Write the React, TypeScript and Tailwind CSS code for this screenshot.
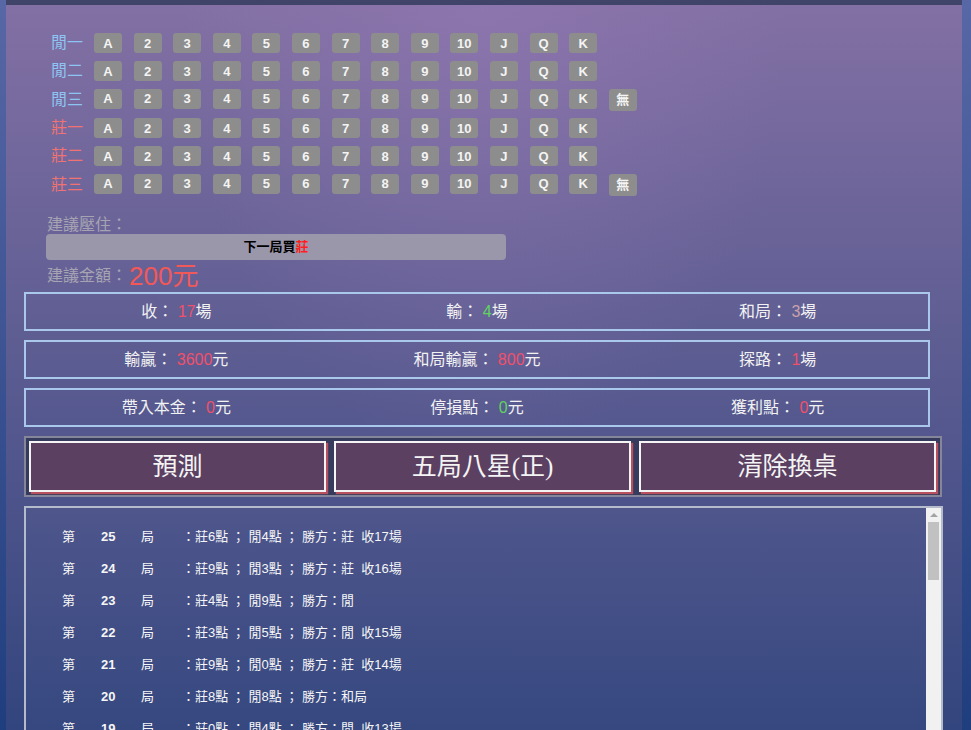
import React from 'react';

const cards = ['A', '2', '3', '4', '5', '6', '7', '8', '9', '10', 'J', 'Q', 'K'];

const rows = [
  { label: '閒一', color: 'text-[#8ec4f2]', none: false },
  { label: '閒二', color: 'text-[#8ec4f2]', none: false },
  { label: '閒三', color: 'text-[#8ec4f2]', none: true },
  { label: '莊一', color: 'text-[#f07272]', none: false },
  { label: '莊二', color: 'text-[#f07272]', none: false },
  { label: '莊三', color: 'text-[#f07272]', none: true },
];

// 牌局紀錄 (newest first)
const history: [number, number, number, string, number | null][] = [
  [25, 6, 4, '莊', 17],
  [24, 9, 3, '莊', 16],
  [23, 4, 9, '閒', null],
  [22, 3, 5, '閒', 15],
  [21, 9, 0, '莊', 14],
  [20, 8, 8, '和局', null],
  [19, 0, 4, '閒', 13],
  [18, 7, 2, '莊', 12],
  [17, 5, 6, '閒', 11],
  [16, 8, 1, '莊', 10],
  [15, 2, 7, '閒', null],
  [14, 6, 6, '和局', null],
  [13, 9, 5, '莊', 9],
  [12, 3, 8, '閒', 8],
  [11, 7, 4, '莊', 7],
  [10, 1, 6, '閒', null],
  [9, 8, 3, '莊', 6],
  [8, 4, 7, '閒', 5],
  [7, 5, 5, '和局', null],
  [6, 9, 2, '莊', 4],
  [5, 0, 8, '閒', 3],
  [4, 6, 3, '莊', null],
  [3, 7, 9, '閒', 2],
  [2, 8, 4, '莊', 1],
  [1, 2, 2, '和局', null],
];

function CardButton({ text, tall }: { text: string; tall?: boolean }) {
  return (
    <button
      className={`w-[28px] ${tall ? 'h-[22px]' : 'h-[20px]'} rounded-[3px] bg-[#8d8d8d] text-[13px] font-bold text-[#f4f4f4] leading-none flex items-center justify-center`}
    >
      {text}
    </button>
  );
}

function StatBox({ items }: { items: { label: string; value: string; unit: string; color: string }[] }) {
  return (
    <div className="grid grid-cols-3 h-[39px] w-[906px] border-2 border-[#a9c8ec] text-[16px] text-[#f2f2f2] items-center text-center">
      {items.map((it) => (
        <div key={it.label}>
          {it.label}： <span className={it.color}>{it.value}</span>
          {it.unit}
        </div>
      ))}
    </div>
  );
}

export default function App() {
  return (
    <div className="h-[730px] w-full overflow-hidden bg-linear-to-b from-[#5867a6] to-[#1f3e7e] font-['Liberation_Sans','Noto_Sans_CJK_TC',sans-serif]">
      <div className="ml-[6px] w-[956px] h-full bg-[radial-gradient(ellipse_at_50%_0%,rgba(160,128,190,0.35),transparent_45%),linear-gradient(to_bottom,#8370a4,#5f5e93_45%,#33457e)]">
        <div className="h-[5px] bg-[#3f4468]" />

        {/* 牌點選擇 */}
        <div className="pt-[24px] pl-[45px]">
          {rows.map((r) => (
            <div key={r.label} className={`flex items-center ${r.none ? 'h-[29px]' : 'h-[28px]'}`}>
              <div className={`w-[43px] text-[16px] ${r.color}`}>{r.label}</div>
              <div className="flex gap-[11.6px]">
                {cards.map((c) => (
                  <CardButton key={c} text={c} />
                ))}
                {r.none && <CardButton text="無" tall />}
              </div>
            </div>
          ))}
        </div>

        <div className="ml-[41px] mt-[17px] text-[16px] leading-[18px] text-[#a6a4b2]">建議壓住：</div>
        <div className="ml-[40px] w-[460px] h-[26px] rounded-[4px] bg-[#9a97aa] flex items-center justify-center text-[13px] font-bold text-black">
          下一局買<span className="text-[#ff1f1f]">莊</span>
        </div>
        <div className="ml-[41px] h-[32px] flex items-center text-[16px] text-[#a6a4b2]">
          建議金額：<span className="text-[26px] text-[#f25858] ml-[2px]">200元</span>
        </div>

        <div className="ml-[18px] flex flex-col gap-[9px]">
          <StatBox
            items={[
              { label: '收', value: '17', unit: '場', color: 'text-[#f0506a]' },
              { label: '輸', value: '4', unit: '場', color: 'text-[#5fd35f]' },
              { label: '和局', value: '3', unit: '場', color: 'text-[#c9a2aa]' },
            ]}
          />
          <StatBox
            items={[
              { label: '輸贏', value: '3600', unit: '元', color: 'text-[#f0506a]' },
              { label: '和局輸贏', value: '800', unit: '元', color: 'text-[#f0506a]' },
              { label: '探路', value: '1', unit: '場', color: 'text-[#f0506a]' },
            ]}
          />
          <StatBox
            items={[
              { label: '帶入本金', value: '0', unit: '元', color: 'text-[#f0506a]' },
              { label: '停損點', value: '0', unit: '元', color: 'text-[#5fd35f]' },
              { label: '獲利點', value: '0', unit: '元', color: 'text-[#f0506a]' },
            ]}
          />

          <div className="w-[918px] border-2 border-[#86869a] bg-[#363b5e] p-[3px] flex gap-[8px]">
            {['預測', '五局八星(正)', '清除換桌'].map((t) => (
              <button
                key={t}
                className="w-[297px] h-[51px] border-2 border-[#f4f4f4] bg-[#5b4062] shadow-[2px_2px_1px_#b8505e] text-[25px] text-[#f4f4f4] font-['Liberation_Serif','Noto_Sans_CJK_TC',serif] flex items-center justify-center"
              >
                {t}
              </button>
            ))}
          </div>

          {/* 紀錄 */}
          <div className="w-[919px] h-[240px] border-2 border-[#b4bccc] bg-white/[0.02] flex">
            <div className="flex-1 overflow-hidden pt-[13px] pl-[36px] text-[13px] text-[#f6f6f6]">
              {history.map(([no, b, p, win, shou]) => (
                <div key={no} className="grid grid-cols-[39px_40px_41px_auto] h-[32px] items-center">
                  <span>第</span>
                  <span className="font-bold">{no}</span>
                  <span>局</span>
                  <span className="whitespace-pre">
                    ：莊{b}點 ； 閒{p}點 ； 勝方：{win}
                    {shou !== null ? `  收${shou}場` : ''}
                  </span>
                </div>
              ))}
            </div>
            {/* scrollbar */}
            <div className="w-[15px] bg-[#f1f1f1] flex flex-col items-center">
              <div className="h-[14px] flex items-center justify-center">
                <div className="w-0 h-0 border-x-[4px] border-x-transparent border-b-[4px] border-b-[#a3a3a3]" />
              </div>
              <div className="w-[11px] h-[58px] bg-[#c1c1c1]" />
            </div>
          </div>
        </div>
      </div>
    </div>
  );
}
